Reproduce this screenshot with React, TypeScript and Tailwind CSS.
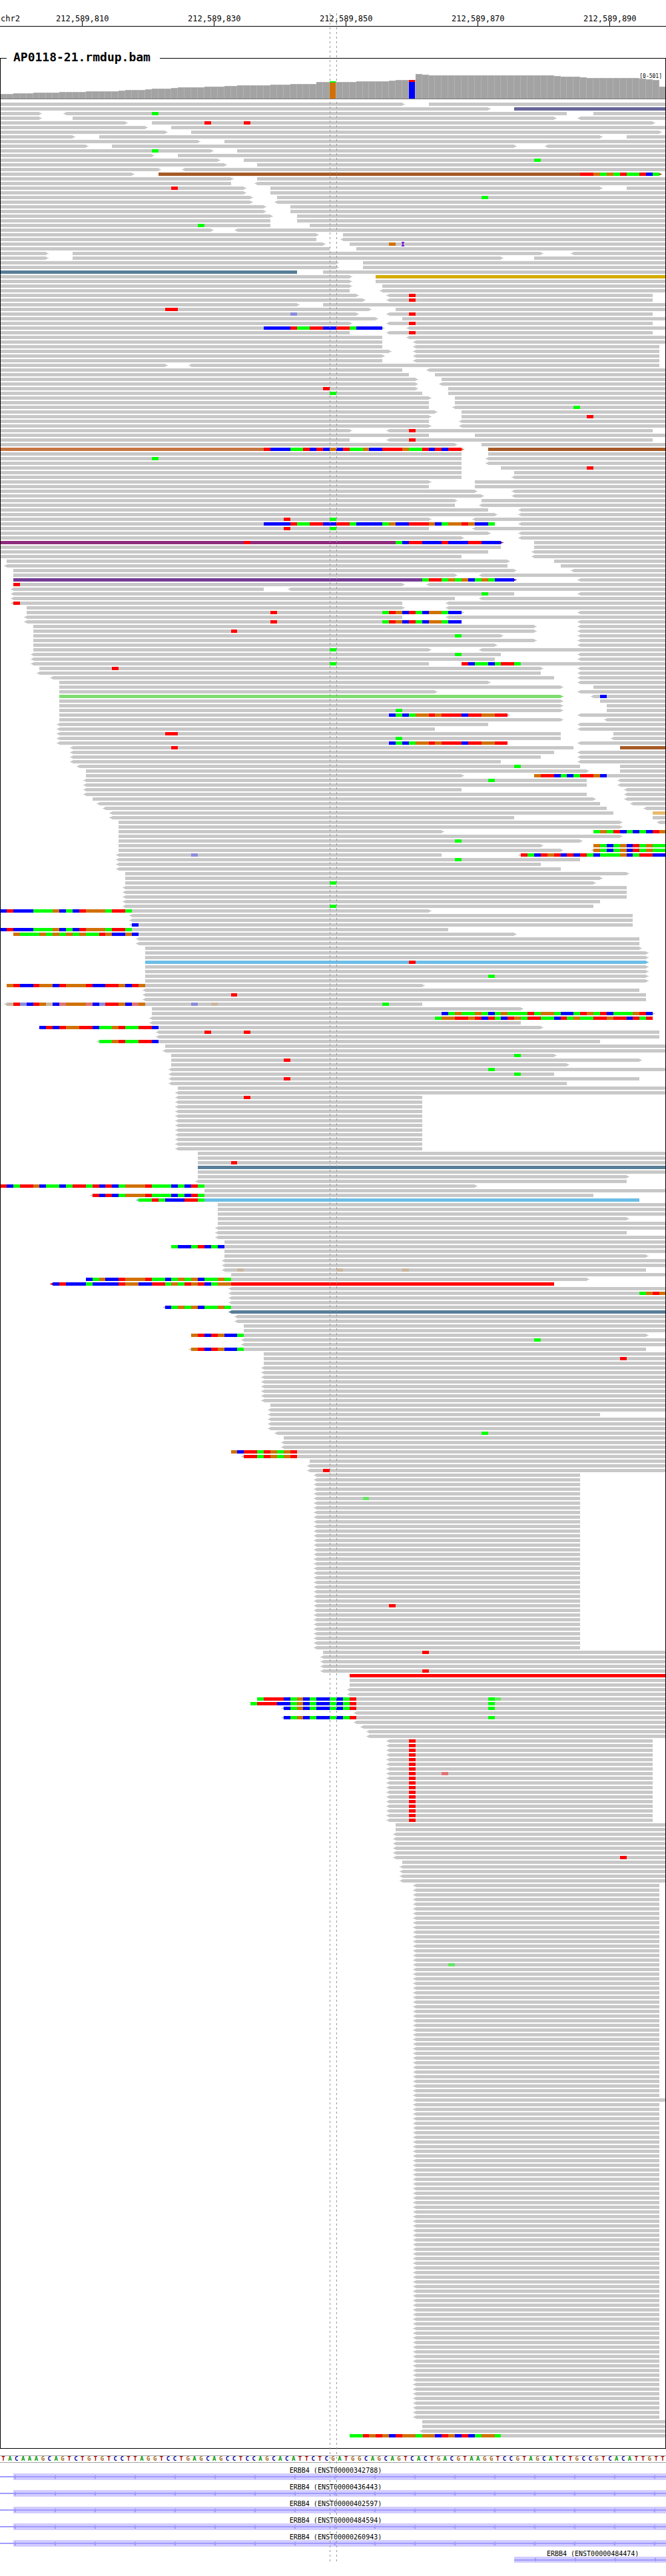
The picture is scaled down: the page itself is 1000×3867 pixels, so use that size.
import React from 'react';

const BASES = 101;

const REFERENCE =
  'TACAAAGCAGTCTGTGTCCTTAGGTCCTGAGCAGCCTCCAGCACATTCTCGATGGCAGCAGTCACTGACGTAAGGTCCGTAGCATCTGCCGTCACATTGTT';

const LETTER: Record<string, string> = {
  A: 'text-[#009900]',
  C: 'text-[#000099]',
  G: 'text-[#a5681c]',
  T: 'text-[#aa0000]',
};

const READ_COLOR: Record<string, string> = {
  slate: 'text-[#666699]',
  brown: 'text-[#a65a26]',
  steel: 'text-[#587e98]',
  gold: 'text-[#d6ac00]',
  copper: 'text-[#c87641]',
  plum: 'text-[#8f2b7c]',
  violet: 'text-[#743a94]',
  lime: 'text-[#80dc70]',
  tan: 'text-[#e8bb6e]',
  sky: 'text-[#6cbee6]',
  red: 'text-[#ff0000]',
};

/* Lower case is a confident call, upper case a low-quality one. */
const BASE_COLOR: Record<string, string> = {
  g: 'bg-[#00ff00]',
  r: 'bg-[#ff0000]',
  b: 'bg-[#0000ff]',
  o: 'bg-[#d17105]',
  G: 'bg-[#64e664]',
  R: 'bg-[#e07474]',
  B: 'bg-[#8c8cdc]',
  O: 'bg-[#cab69e]',
};

/*
 * One line per row. "<a-b>" is a read over bases a to b with an arrow on the
 * marked side, "*name" its colour, "@n:xyz" calls from base n on, "+n" an
 * insertion, and a leading "Nx" repeats the row.
 */
const PILEUP = `
0-61> 65-101
0-74> 78-101*slate
0-6> <10-86 90-101 @23:g
0-6> 11-84> <88-101
0-19> 23-99> @31:r @37:r
0-22> 26-101
0-25> 29-100>
0-11> 15-91> 95-101
0-30> 34-101
0-13> 17-78> <83-101
0-32> 36-101 @23:g
0-23> 27-101
0-33> 37-101 @81:g
0-34> 39-101
0-24> <28-101
0-20> 24-100>*brown @88:rrogogrggrbg
0-35> 39-101
0-35 <39-101
0-37> 41-91> 95-101 @26:r
0-37> 41-101
0-38> 42-101 @73:g
0-38> <42-101
0-40> 44-101
0-40> 44-101
0-41> 45-101
0-41 45-101
0-41 47-101 @30:g
0-32> <36-101
0-48> 52-101
0-48 <52-101
0-49> 53-101 @59:o +61
0-50 54-101
0-7> 11-82> <87-101
0-7> 11-76> 81-101
2x 0-51> 55-101
0-45*steel 49-101
0-53> 57-101*gold
0-53> 57-101
0-53> 58-101
0-53 <58-101
0-54> <59-99 @62:r
0-55> <59-99 @62:r
0-45> 49-101
0-56> 60-101 @25:rr
0-54> <59-99 @44:B @62:r
0-57> 61-101
0-53> <59-99 @62:r
0-58> <62-101 @40:bbbbrggrrbbrrgbbbb
0-53 <59-99 @62:r
0-58 <62-101
0-58 <63-101
0-58 <63-100
0-59> <63-100
0-58> <63-100
0-58 <63-100
0-25> <29-100
0-61 <65-101
0-62 66-101
0-63> 67-101
0-63> <67-101
0-63> 68-101 @49:r
0-64 68-101 @50:g
0-65> 69-101
0-65 69-101
0-65 <69-101 @87:g
0-66> 70-101
0-65> 70-101 @89:r
0-65 <70-101
0-65> <70-101
0-53> <59-99 @62:r
0-65 72-101
0-53 <59-99 @62:r
0-69> 73-101
0-70>*copper 74-101*brown @40:rbbbggrbrbobrggobbrrroggrbrbrr
0-70 74-101
0-70 <74-101 @23:g
0-70 <74-101
0-70 76-101 @89:r
0-70 78-101
0-70 <78-101
0-65> 72-101
0-65 72-101
0-72> <78-101
0-73> <78-101
0-69> 73-101
0-69 <73-101
0-74 <79-101
0-75> <79-101
0-65> <72-101 @43:r @50:g
0-75 <79-101 @40:bbbbrggrrbbrrgbbbbgobbrrrobgoorobbg
0-65 <72-101 @43:r @50:g
0-74> <79-101
0-70> <79-101
0-76>*plum 81-101 @37:r @60:gbrrbbbrbbbrrbbb
0-76 81-101
0-74 <81-101
0-70 <81-101
1-77> 84-101
<1-77 85-101
2-78> <87-101
2-69> <73-101
2-78>*violet <88-101 @64:grrgogobgogbbb
2-61> <65-101 @2:r
<2-40 <44-101
<2-78 <88-101 @73:g
<2-69 <73-101
<2-61 <68-101 @2:r
4-61> <68-101
4-70> <88-101 @41:r @58:grobrgboogbb
<4-61 <68-101
<4-70 <88-101 @41:r @58:grobrgboogbb
5-81> <88-101
5-81> <88-101 @35:r
5-76> <88-101 @69:g
5-81> <88-101
5-75> <88-101
5-65> <73-101 @50:g
<5-76 <88-101 @69:g
<5-75 <88-101
<5-65 70-101 @50:g @70:rbggbgrrg
6-82> <88-101 @17:r
<6-82 <88-101
<8-84 <88-101
9-74> <88-101
9-85> 90-101
9-66> <88-101
9-85>*lime <90-101 @91:b
9-85> 91-101
9-85> 92-101
9-85> 92-101 @60:g
9-77> <88-101 @59:bgbgoororrrbrroorr
9-85> <92-101
<9-74 <88-101
<9-66 <88-101
<9-85 93-101 @25:rr
<9-85 <93-101 @60:g
<9-77 <88-101 @59:bgbgoororrrbrroorr
<11-87 94-101*brown @26:r
<11-84 <88-101
<11-82 <88-101
<11-76 <88-101
<12-88 94-101 @78:g
13-89> 94-101
13-70> 81-101 @81:orrbgbgrrob
<13-89 <94-101 @74:g
<13-89 <94-101
<13-70 <95-101
<13-89 <95-101
14-90> <95-101
<15-91 <96-101
<16-92 <98-101
<17-93 99-101*tan
<17-78 99-101
18-94> <100-101
18-94>
18-67> 90-101 @90:gogrbgbgbro
18-94>
18-88> @69:g
18-82> 90-101 @90:ogbgobrgogg
18-85> <90-101 @90:ogbgobrgogg
<18-67 <79-101 @29:B @79:rgbrorbrbrgbgggobgrrbb
<18-88 @69:g
<18-82
<18-85
19-95>
19-91>
19-90> @50:g
3x <19-95
<19-91
<19-90 @50:g
0-65> @0:brbbbgggobgbrooogrrg
2x <20-96
<20-96 @20:b
0-68 @0:brbbbgggobgbrooogrrg
2-78> @2:ogggogogogoggrobbob
2x <21-97
22-97>
2x 22-98>
22-98>*sky @62:r
2x 22-98>
22-98> @74:g
22-98>
1-64> @1:orbbroobrooorbbrrobro
<22-97
<22-98 @35:r
<22-98
<1-64 @1:OrBbroObRoooRbBrrobRo @29:B @32:O @58:g
23-79>
23-99> @67:bgoggogbgogggrgoogbbgrogrbgggorb
<23-99 @66:goorrorbrgbrogrrggbrgoggrrorrbrgr
<23-79
6-82> @6:brbroorrbggorggrrb
<24-100 @31:r @37:r
<24-100
<15-91 @15:ggorggrrb
25-101
<25-101
26-84> @78:g
26-97> @43:r
26-86>
<26-101 @74:g
<26-84 @78:g
<26-97 @43:r
<26-86
27-101
<27-101
<27-64 @37:r
11x <27-64
2x 30-101
30-101 @35:r
30-101*steel
30-101
30-95>
<30-95
0-72> @0:rbgrrobggbgrrgrbrbgooorgggbgbrg
31-101
<14-90 @14:rbrbgooorgggbgbrg
<21-97*sky @21:ggrgbbbrrg
3x 33-101
33-95>
33-101
<33-101
<33-95
<33-101
34-101
26-101 @26:gbbgrbgb
34-101
34-98>
2x <34-101
<34-98 @36:O @51:O @61:O
35-101
13-89> @13:bgobbrooorggbgogobggog
<8-84*red @8:brbbbgbbbbroobbrrgogrorbgoo
<35-101
<35-101 @97:goro
2x <35-101
<25-101 @25:bgogobggog
<35-101*steel
2x <36-101
2x 37-101
29-98> @29:orbrobbg
<37-101 @81:g
<37-101
<29-98 @29:orbrobbg
40-101
40-101 @94:r
40-101
8x <40-101
41-101
<41-101
<41-91
3x <41-101
<42-101 @73:g
43-101
2x <43-101
35-101 @35:obrrgrogor
<37-101 @37:rrgrogor
47-101
<47-101
<47-101 @49:r
5x <48-88
<48-88 @55:G
22x <48-88
<48-88 @59:r
9x <48-88
49-101 @64:r
3x <49-101
<49-101 @64:r
53-101*red
2x 53-101
2x <53-101
39-101 @39:grrrbgobgbbgbgr @74:gG
38-101 @38:grrrbbgobgbbgbgr @74:g
<43-101 @43:bgobgbbgbgr @74:g
<54-101
<43-101 @43:bgobgbbgbgr @74:g
<54-101
<55-101
2x <56-101
7x <59-99 @62:r
<59-99 @62:r @67:R
10x <59-99 @62:r
2x 60-101
5x <60-101
<60-101 @94:r
61-101
4x <61-101
17x <63-100
<63-100 @68:G
28x <63-100
<63-101
68x <63-100
2x 64-101
<64-101
53-101 @53:ggrorobroogoobrobrbgoog
`;

type Read = { start: number; end: number; left: boolean; right: boolean; color: string };
type Call = { start: number; end: number; kind: string };
type Row = { reads: Read[]; calls: Call[]; insertions: number[] };

function parseLine(line: string): Row[] {
  let count = 1;
  const row: Row = { reads: [], calls: [], insertions: [] };
  for (const token of line.split(' ')) {
    if (/^\d+x$/.test(token)) {
      count = parseInt(token, 10);
    } else if (token[0] === '+') {
      row.insertions.push(parseInt(token.slice(1), 10));
    } else if (token[0] === '@') {
      const [at, calls] = token.slice(1).split(':');
      let pos = Number(at);
      for (const run of calls.match(/(.)\1*/g) ?? []) {
        row.calls.push({ start: pos, end: pos + run.length, kind: run[0] });
        pos += run.length;
      }
    } else {
      const m = /^(<?)(\d+)-(\d+)(>?)(?:\*(\w+))?$/.exec(token);
      if (m) {
        row.reads.push({
          start: Number(m[2]),
          end: Number(m[3]),
          left: m[1] === '<',
          right: m[4] === '>',
          color: m[5] ? READ_COLOR[m[5]] : 'text-[#c8c8c8]',
        });
      }
    }
  }
  return Array.from({ length: count }, () => row);
}

const ROWS = PILEUP.trim().split('\n').flatMap(parseLine);

/* [number of bases, bar height] */
const COVERAGE: [number, number][] = [
  [2, 7], [3, 8], [4, 9], [4, 10], [5, 11], [1, 12], [3, 13], [1, 14], [3, 15], [1, 16],
  [4, 17], [3, 18], [2, 19], [5, 20], [3, 21], [4, 22], [2, 25], [1, 26], [3, 25], [5, 26],
  [1, 27], [3, 28], [1, 37], [1, 36], [19, 35], [1, 34], [3, 33], [1, 32], [8, 31], [1, 30],
  [1, 29], [1, 28], [1, 18],
];
const HEIGHTS = COVERAGE.flatMap(([n, h]) => Array.from({ length: n }, () => h));

const TRACK = 'grid grid-cols-[repeat(101,minmax(0,1fr))]';

function span(start: number, end: number): React.CSSProperties {
  return { gridColumn: `${start + 1} / ${end + 1}` };
}

function Ruler() {
  const ticks = [12, 32, 52, 72, 92];
  return (
    <header className={`${TRACK} h-10 items-end border-b border-black text-[12px] leading-4`}>
      <span className="row-start-1 mb-[3px] ml-px whitespace-nowrap" style={span(0, 4)}>
        chr2
      </span>
      {ticks.map((base) => (
        <span key={base} className="row-start-1 flex flex-col items-center" style={span(base, base + 1)}>
          <span className="-mb-1 whitespace-nowrap">{`212,589,${798 + base}`}</span>
          <span className="h-[7px] w-px bg-black" />
        </span>
      ))}
    </header>
  );
}

function Coverage() {
  return (
    <div className="relative z-20 h-12 border-b border-[#777777]">
      <div className={`${TRACK} h-full items-end`}>
        {HEIGHTS.map((h, i) => {
          if (i === 50 || i === 62) {
            const alt = i === 50;
            return (
              <div key={i} className="flex flex-col border-r border-[#b2b2b2]" style={{ height: h }}>
                <div className={alt ? 'h-0.5 bg-[#00ff00]' : 'h-[3px] bg-[#ff0000]'} />
                <div className={alt ? 'flex-1 bg-[#d17105]' : 'flex-1 bg-[#0000ff]'} />
              </div>
            );
          }
          return <div key={i} className="border-t border-r border-[#b2b2b2] bg-[#a3a3a3]" style={{ height: h }} />;
        })}
      </div>
      <span className="absolute top-2 right-1.5 text-[8px] leading-3">[0-501]</span>
    </div>
  );
}

function Tip({ side }: { side: 'left' | 'right' }) {
  return side === 'left' ? (
    <svg className="absolute top-0 -left-1 h-[5px] w-1 fill-current" viewBox="0 0 4 5" shapeRendering="crispEdges">
      <path d="M0 2h2V1h2v3H2V3H0z" />
    </svg>
  ) : (
    <svg className="absolute top-0 -right-1 h-[5px] w-1 fill-current" viewBox="0 0 4 5" shapeRendering="crispEdges">
      <path d="M0 1h2v1h2v1H2v1H0z" />
    </svg>
  );
}

const PileupRow = React.memo(function PileupRow({ row }: { row: Row }) {
  return (
    <div className={`${TRACK} h-[5px]`}>
      {row.reads.map((r) => (
        <div key={r.start} className={`relative row-start-1 bg-current ${r.color}`} style={span(r.start, r.end)}>
          {r.left && <Tip side="left" />}
          {r.right && <Tip side="right" />}
        </div>
      ))}
      {row.calls.map((c) => (
        <div key={c.start} className={`relative row-start-1 ${BASE_COLOR[c.kind]}`} style={span(c.start, c.end)} />
      ))}
      {row.insertions.map((at) => (
        <div key={at} className="relative row-start-1" style={span(at, at + 1)}>
          <svg className="absolute -top-px -left-px h-[7px] w-1" viewBox="0 0 4 7" shapeRendering="crispEdges">
            <path fill="#7a1fdc" d="M0 0h4v2H3v3h1v2H0V5h1V2H0z" />
          </svg>
        </div>
      ))}
    </div>
  );
});

function Sequence() {
  return (
    <div className={`${TRACK} mt-2.5 h-[11px] border-y border-[#a3a3a3] text-center text-[9px] leading-[9px] font-bold`}>
      {REFERENCE.split('').map((c, i) => (
        <span key={i} className={LETTER[c]}>
          {c}
        </span>
      ))}
    </div>
  );
}

function Transcript({ name, start }: { name: string; start: number }) {
  const partial = start > 2;
  return (
    <li className={TRACK}>
      <span
        className="h-[15px] pl-2 text-center text-[10px] leading-[21px] whitespace-nowrap"
        style={span(partial ? start : 0, BASES)}
      >
        {name}
      </span>
      {!partial && <span className="row-start-2 mt-1 h-0.5 bg-[#9f9bff]" style={span(0, start)} />}
      <span
        className={
          partial
            ? 'row-start-2 flex h-[9px] items-center overflow-hidden bg-[#d2ccff] bg-[linear-gradient(#9f9bff,#9f9bff)] bg-[length:100%_2px] bg-[position:0_4px] bg-no-repeat pl-[29px]'
            : 'row-start-2 flex h-[10px] items-center overflow-hidden bg-[#d2ccff] bg-[linear-gradient(#9f9bff,#9f9bff)] bg-[length:100%_2px] bg-[position:0_4px] bg-no-repeat'
        }
        style={span(start, BASES)}
      >
        {Array.from({ length: partial ? 4 : 17 }, (_, i) => (
          <span key={i} className="w-15 shrink-0">
            <svg className="block h-[7px] w-1 fill-[#9f9bff]" viewBox="0 0 4 7">
              <path d="M0 3.5 4 0v7z" />
            </svg>
          </span>
        ))}
      </span>
    </li>
  );
}

const TRANSCRIPTS = [
  { name: 'ERBB4 (ENST00000342788)', start: 2 },
  { name: 'ERBB4 (ENST00000436443)', start: 2 },
  { name: 'ERBB4 (ENST00000402597)', start: 2 },
  { name: 'ERBB4 (ENST00000484594)', start: 2 },
  { name: 'ERBB4 (ENST00000260943)', start: 2 },
  { name: 'ERBB4 (ENST00000484474)', start: 78 },
];

const GUIDE =
  'absolute top-5 bottom-[22px] z-10 w-px bg-[repeating-linear-gradient(to_bottom,#969696_0px,#969696_3px,transparent_3px,transparent_7px)]';

export default function App() {
  return (
    <main className="relative overflow-hidden bg-white pb-5 font-['DejaVu_Sans_Mono',monospace] text-black">
      <Ruler />
      <fieldset className="mt-[34px] min-w-0 border border-black pb-4">
        <legend className="ml-[9px] pr-3.5 pb-1 pl-2.5 text-[18px] leading-[23px] font-bold">
          AP0118-21.rmdup.bam
        </legend>
        <div className="overflow-hidden">
          <div className="-mx-px">
            <Coverage />
            <div className="mt-[5px] flex flex-col gap-0.5">
              {ROWS.map((row, i) => (
                <PileupRow key={i} row={row} />
              ))}
            </div>
          </div>
        </div>
      </fieldset>
      <Sequence />
      <ul className="mt-px">
        {TRANSCRIPTS.map((t) => (
          <Transcript key={t.name} {...t} />
        ))}
      </ul>
      <div className={`${GUIDE} left-[49.505%]`} />
      <div className={`${GUIDE} left-[50.495%]`} />
    </main>
  );
}
